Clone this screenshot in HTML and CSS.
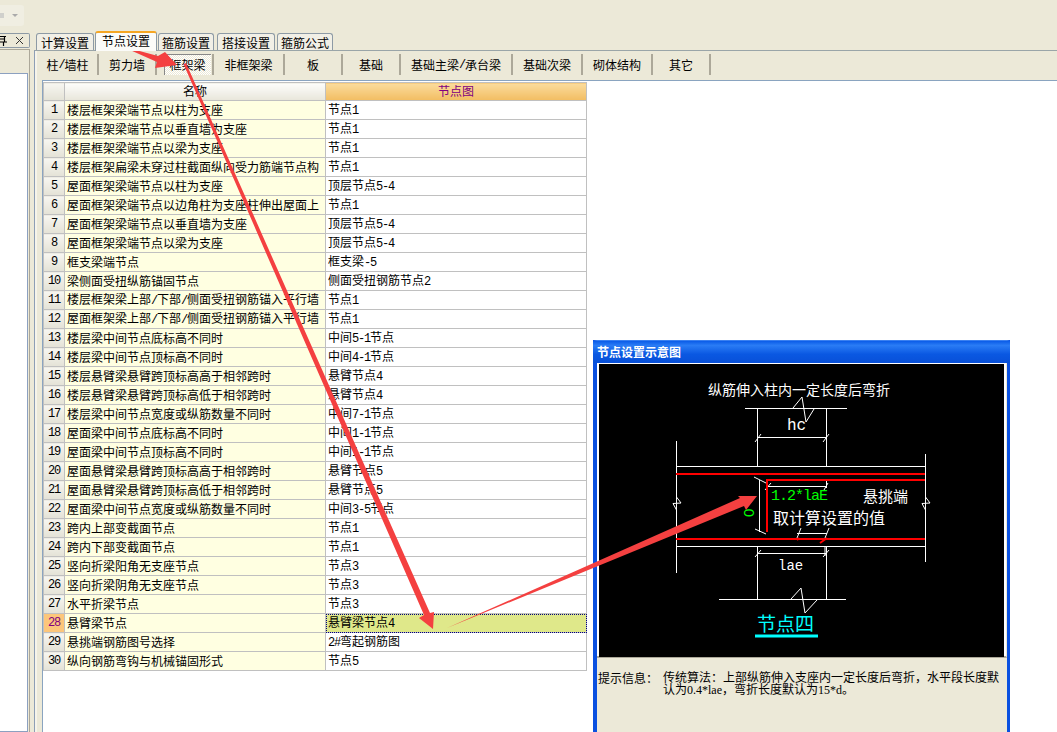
FILE: index.html
```html
<!DOCTYPE html>
<html lang="zh">
<head>
<meta charset="utf-8">
<title>节点设置</title>
<link rel="stylesheet" href="styles.css">
</head>
<body>
<div class="app">
  <div class="toolbar">
    <div class="tool-group">
      <span class="tool-icon"></span>
      <span class="tool-caret"></span>
    </div>
  </div>
  <div class="main">
    <aside class="side">
      <div class="side-head">
        <svg class="side-pin" width="7" height="10" viewBox="0 0 7 10"><path d="M0 .5H6M0 3H5M4.5 0V6M0 6H7M3.5 6V10" stroke="#000" stroke-width="1.2" fill="none"/></svg>
        <span class="side-close">
          <svg width="9" height="9" viewBox="0 0 9 9"><path d="M1 1L8 8M8 1L1 8" stroke="#333" fill="none"/></svg>
        </span>
      </div>
      <div class="side-body">
        <div class="side-list"></div>
      </div>
    </aside>
    <section class="work">
      <div class="tabs">
        <span class="tab t58 g1">计算设置</span>
        <span class="tab active">节点设置</span>
        <span class="tab t56 g3">箍筋设置</span>
        <span class="tab t58 g2">搭接设置</span>
        <span class="tab t56">箍筋公式</span>
      </div>
      <div class="panel">
        <div class="subtabs">
          <span class="sub w61">柱<span class="la">/</span>墙柱</span>
          <span class="sub w58">剪力墙</span>
          <span class="sub w57 pressed"><b>框架梁</b></span>
          <span class="sub w71">非框架梁</span>
          <span class="sub w58">板</span>
          <span class="sub w58">基础</span>
          <span class="sub w112">基础主梁<span class="la">/</span>承台梁</span>
          <span class="sub w70">基础次梁</span>
          <span class="sub w70">砌体结构</span>
          <span class="sub w58">其它</span>
        </div>
        <div class="pane">
          <table class="grid">
            <thead>
              <tr><th class="idx"></th><th class="name">名称</th><th class="val">节点图</th></tr>
            </thead>
            <tbody>
              <tr><td class="idx">1</td><td class="name">楼层框架梁端节点以柱为支座</td><td class="val">节点<span class="la">1</span></td></tr>
              <tr><td class="idx">2</td><td class="name">楼层框架梁端节点以垂直墙为支座</td><td class="val">节点<span class="la">1</span></td></tr>
              <tr><td class="idx">3</td><td class="name">楼层框架梁端节点以梁为支座</td><td class="val">节点<span class="la">1</span></td></tr>
              <tr><td class="idx">4</td><td class="name">楼层框架扁梁未穿过柱截面纵向受力筋端节点构</td><td class="val">节点<span class="la">1</span></td></tr>
              <tr><td class="idx">5</td><td class="name">屋面框架梁端节点以柱为支座</td><td class="val">顶层节点<span class="la">5-4</span></td></tr>
              <tr><td class="idx">6</td><td class="name">屋面框架梁端节点以边角柱为支座柱伸出屋面上</td><td class="val">节点<span class="la">1</span></td></tr>
              <tr><td class="idx">7</td><td class="name">屋面框架梁端节点以垂直墙为支座</td><td class="val">顶层节点<span class="la">5-4</span></td></tr>
              <tr><td class="idx">8</td><td class="name">屋面框架梁端节点以梁为支座</td><td class="val">顶层节点<span class="la">5-4</span></td></tr>
              <tr><td class="idx">9</td><td class="name">框支梁端节点</td><td class="val">框支梁<span class="la">-5</span></td></tr>
              <tr><td class="idx">10</td><td class="name">梁侧面受扭纵筋锚固节点</td><td class="val">侧面受扭钢筋节点<span class="la">2</span></td></tr>
              <tr><td class="idx">11</td><td class="name">楼层框架梁上部<span class="la">/</span>下部<span class="la">/</span>侧面受扭钢筋锚入平行墙</td><td class="val">节点<span class="la">1</span></td></tr>
              <tr><td class="idx">12</td><td class="name">屋面框架梁上部<span class="la">/</span>下部<span class="la">/</span>侧面受扭钢筋锚入平行墙</td><td class="val">节点<span class="la">1</span></td></tr>
              <tr><td class="idx">13</td><td class="name">楼层梁中间节点底标高不同时</td><td class="val">中间<span class="la">5-1</span>节点</td></tr>
              <tr><td class="idx">14</td><td class="name">楼层梁中间节点顶标高不同时</td><td class="val">中间<span class="la">4-1</span>节点</td></tr>
              <tr><td class="idx">15</td><td class="name">楼层悬臂梁悬臂跨顶标高高于相邻跨时</td><td class="val">悬臂节点<span class="la">4</span></td></tr>
              <tr><td class="idx">16</td><td class="name">楼层悬臂梁悬臂跨顶标高低于相邻跨时</td><td class="val">悬臂节点<span class="la">4</span></td></tr>
              <tr><td class="idx">17</td><td class="name">楼层梁中间节点宽度或纵筋数量不同时</td><td class="val">中间<span class="la">7-1</span>节点</td></tr>
              <tr><td class="idx">18</td><td class="name">屋面梁中间节点底标高不同时</td><td class="val">中间<span class="la">1-1</span>节点</td></tr>
              <tr><td class="idx">19</td><td class="name">屋面梁中间节点顶标高不同时</td><td class="val">中间<span class="la">1-1</span>节点</td></tr>
              <tr><td class="idx">20</td><td class="name">屋面悬臂梁悬臂跨顶标高高于相邻跨时</td><td class="val">悬臂节点<span class="la">5</span></td></tr>
              <tr><td class="idx">21</td><td class="name">屋面悬臂梁悬臂跨顶标高低于相邻跨时</td><td class="val">悬臂节点<span class="la">5</span></td></tr>
              <tr><td class="idx">22</td><td class="name">屋面梁中间节点宽度或纵筋数量不同时</td><td class="val">中间<span class="la">3-5</span>节点</td></tr>
              <tr><td class="idx">23</td><td class="name">跨内上部变截面节点</td><td class="val">节点<span class="la">1</span></td></tr>
              <tr><td class="idx">24</td><td class="name">跨内下部变截面节点</td><td class="val">节点<span class="la">1</span></td></tr>
              <tr><td class="idx">25</td><td class="name">竖向折梁阳角无支座节点</td><td class="val">节点<span class="la">3</span></td></tr>
              <tr><td class="idx">26</td><td class="name">竖向折梁阴角无支座节点</td><td class="val">节点<span class="la">3</span></td></tr>
              <tr><td class="idx">27</td><td class="name">水平折梁节点</td><td class="val">节点<span class="la">3</span></td></tr>
              <tr class="current"><td class="idx">28</td><td class="name">悬臂梁节点</td><td class="val">悬臂梁节点<span class="la">4</span></td></tr>
              <tr><td class="idx">29</td><td class="name">悬挑端钢筋图号选择</td><td class="val"><span class="la">2#</span>弯起钢筋图</td></tr>
              <tr><td class="idx">30</td><td class="name">纵向钢筋弯钩与机械锚固形式</td><td class="val">节点<span class="la">5</span></td></tr>
            </tbody>
          </table>
        </div>
      </div>
    </section>
  </div>

  <div class="dialog">
    <div class="dialog-title">节点设置示意图</div>
    <div class="dialog-canvas">
      <svg class="drawing" width="405" height="293" viewBox="599 364 405 293">
        <g class="wire">
          <path d="M745 408.5H847M757.5 408.5V466M826.5 408.5V466"/>
          <path d="M793 408L802 397L806 422L814 409"/>
          <path d="M757 437.5H826M755 442L761 434M823 442L829 434"/>
          <path d="M676.5 441V573M925.5 454V562"/>
          <path d="M676 466.5H925M676 546.5H925"/>
          <path d="M676.5 497L681 503L673 503.5L676.5 510M925.5 497L930 503L922 503.5L925.5 510"/>
          <path d="M757.5 546V599.5M826.5 546V599.5M719 599.5H846"/>
          <path d="M791 599L801 588L805 613L817 600"/>
          <path d="M757 553.5H826M755 557L761 550M823 557L829 550M825 546V556"/>
          <path d="M767 486.5H826M765 490L771 483M824 490L828 483M826.5 480V488"/>
          <path d="M759.5 480V532M754 477L766 483M755 529L766 534"/>
          <path d="M797 533.5H827M797 538L801 528M825 538L829 528"/>
        </g>
        <g class="rebar">
          <path d="M676 474H925M676 539H925"/>
          <path d="M767 532V480H925"/>
          <path d="M820 543L827 538M797 540L799 538"/>
        </g>
        <text class="t-label t14" x="708" y="395">纵筋伸入柱内一定长度后弯折</text>
        <text class="t-mono t16" x="787" y="430">hc</text>
        <text class="t-green" x="771" y="500">1.2*laE</text>
        <text class="t-rot" transform="translate(754 517) rotate(-90)">0</text>
        <text class="t-label t15" x="863" y="502">悬挑端</text>
        <text class="t-label t16" x="773" y="524">取计算设置的值</text>
        <text class="t-mono t14" x="778" y="570">lae</text>
        <text class="t-cyan" x="757" y="631">节点四</text>
        <path class="cyan-bar" d="M755 636H818"/>
      </svg>
    </div>
    <div class="dialog-info">
      <span class="info-label">提示信息：</span>
      <span class="info-text">传统算法：上部纵筋伸入支座内一定长度后弯折，水平段长度默认为0.4*lae，弯折长度默认为15*d。</span>
    </div>
  </div>

  <svg class="arrows" width="1057" height="732" viewBox="0 0 1057 732">
    <polygon points="121,46 158,56 165,52 177,65 155,68 157,62"/>
    <polygon points="183.5,64 186,63 430,613 434,612 433,629 419,618 424,615"/>
    <polygon points="447,628 740,498 738,496 757,496 746,510 744,506"/>
  </svg>
</div>
</body>
</html>
```
FILE: styles.css
```css
* { box-sizing: border-box; }
html, body { margin: 0; height: 100%; }
body {
  background: #ece9d8;
  color: #000;
  font: 12px/1 "Noto Sans CJK SC", sans-serif;
  overflow: hidden;
}
.la { font-family: "Liberation Mono", monospace; letter-spacing: -1.2px; }
.app { position: relative; width: 1057px; height: 732px; overflow: hidden; display: flex; flex-direction: column; }

.toolbar { height: 31px; padding-top: 5px; flex: none; }
.tool-group {
  width: 24px; height: 21px; background: #f0eee2; border-radius: 0 3px 3px 0;
  display: flex; align-items: center; gap: 8px;
}
.tool-icon { width: 4px; height: 5px; background: #d0d0cc; }
.tool-caret { width: 0; height: 0; border: 3px solid transparent; border-top: 3px solid #aaa; border-bottom: 0; }

.main { flex: 1; display: flex; min-height: 0; }
.side { width: 34px; flex: none; display: flex; flex-direction: column; }
.side-head {
  height: 15px; margin-top: 2px; width: 30px;
  border: 1px solid #8d9aa5; border-left: 0; border-radius: 0 2px 2px 0;
  display: flex; align-items: center; justify-content: space-between;
  overflow: hidden;
}
.side-pin { display: block; }
.side-close { width: 9px; height: 9px; margin-right: 5px; display: block; line-height: 0; }
.side-body { flex: 1; width: 30px; margin-top: 1px; border: 1px solid #aca899; border-left: 0; border-bottom: 0; padding-top: 23px; }
.side-list { height: 100%; width: 28px; background: #fff; border: 1px solid #8ca0c0; border-left: 0; }

.work { flex: 1; display: flex; flex-direction: column; min-width: 0; }
.tabs { height: 19px; display: flex; align-items: flex-end; padding-left: 2px; position: relative; z-index: 1; flex: none; }
.tab {
  height: 17px; padding-top: 2px; background: #f1efe6; border: 1px solid #8d9aa5; border-bottom: 0;
  border-radius: 3px 3px 0 0; display: flex; align-items: center; justify-content: center;
}
.t58 { width: 58px; }
.t56 { width: 56px; }
.g1 { margin-right: 1px; }
.g2 { margin-right: 2px; }
.g3 { margin-right: 3px; }
.tab.active {
  width: 62px; height: 20px; margin-right: 1px; padding: 0 0 2px; background: #fbfbf8;
  border-top: 2px solid #f5a623; margin-bottom: -1px;
}
.panel {
  flex: 1; min-height: 0; display: flex; flex-direction: column;
  border-left: 1px solid #8d9eb5; border-top: 1px solid #9aa5a8;
  box-shadow: inset 2px 0 0 #f6f4ea;
}
.subtabs { height: 29px; flex: none; padding: 3px 0 5px 3px; display: flex; }
.sub {
  height: 21px; display: flex; align-items: center; justify-content: center;
  border-right: 2px solid #aca899; flex: none;
}
.sub b { font-weight: 400; }
.w61 { width: 61px; } .w58 { width: 58px; } .w57 { width: 57px; } .w71 { width: 71px; }
.w112 { width: 112px; } .w70 { width: 70px; }
.sub.pressed { padding-left: 5px; }
.sub.pressed b {
  display: flex; align-items: center; justify-content: center; width: 47px; height: 21px;
  border-top: 1px solid #888; border-left: 1px solid #888;
  background: repeating-conic-gradient(#fff 0 25%, #ece9d8 0 50%) 0 0 / 2px 2px;
}
.pane { position: relative; flex: 1; margin-left: 7px; background: #fff; border-left: 1px solid #8aa4c0; border-top: 1px solid #8aa4c0; padding: 1px 0 0; min-height: 0; }

.grid { border-collapse: collapse; table-layout: fixed; width: 544px; }
.grid th, .grid td { border: 1px solid #c0c0c0; height: 19px; padding: 0 0 1px; white-space: nowrap; overflow: hidden; font-weight: 400; }
.grid th { height: 18px; text-align: center; }
.grid .idx { width: 21px; text-align: center; background: linear-gradient(#f7f6f1, #e4e2d6); font-family: "Liberation Mono", monospace; letter-spacing: -1.2px; }
.grid td.name { width: 261px; background: #ffffe1; padding-left: 2px; }
.grid th.name { background: linear-gradient(#fdfdfb, #e8e6da); }
.grid td.val { padding-left: 2px; background: #fff; }
.grid th.val { color: #800080; background: linear-gradient(#fbdc9d, #f2bd62); }
.current td.idx { background: #fcc67b; color: #800080; }
.current td.val { background: #dfe88a; outline: 1px dotted #000080; outline-offset: -1px; }

.dialog {
  position: absolute; left: 593px; top: 340px; width: 417px; height: 392px;
  background: #ece9d8; border: solid #0a50e0; border-width: 0 3px; border-left-width: 4px;
  border-top: 1px solid #3a80f0; display: flex; flex-direction: column;
}
.dialog-title {
  height: 22px; margin: 0 -3px 0 -4px; padding: 5px 0 0 4px; color: #fff; font-weight: 700;
  background: linear-gradient(#0a5be8 0, #2a7cf5 20%, #0a58e2 60%, #0850d8 100%); flex: none;
}
.dialog-canvas { height: 295px; flex: none; padding: 1px 0 0 2px; background: #fff; border-right: 1px solid #ece9d8; border-bottom: 2px solid #aca899; }
.drawing { display: block; background: #000; }
.wire path { fill: none; stroke: #fff; stroke-width: 1; }
.rebar path { fill: none; stroke: #f00; stroke-width: 2; }
.cyan-bar { stroke: #0ff; stroke-width: 3; fill: none; }
.t-label { fill: #fff; font-family: "Noto Sans CJK SC", sans-serif; }
.t14 { font-size: 14px; }
.t15 { font-size: 15px; }
.t16 { font-size: 16px; }
.t-mono { fill: #fff; font-family: "Liberation Mono", monospace; }
.t-green { fill: #0f0; font: 15px "Liberation Mono", monospace; letter-spacing: -1px; }
.t-rot { fill: #0f0; font: 15px "Liberation Sans", sans-serif; }
.t-cyan { fill: #0ff; font: 19px "Noto Sans CJK SC", sans-serif; }
.dialog-info { flex: 1; display: flex; padding: 14px 5px 0 1px; line-height: 12px; }
.info-label { width: 65px; flex: none; }
.info-text { width: 337px; flex: none; font-family: "Liberation Serif", "Noto Sans CJK SC", serif; }

.arrows { position: absolute; left: 0; top: 0; pointer-events: none; }
.arrows polygon { fill: #f44040; }
```
